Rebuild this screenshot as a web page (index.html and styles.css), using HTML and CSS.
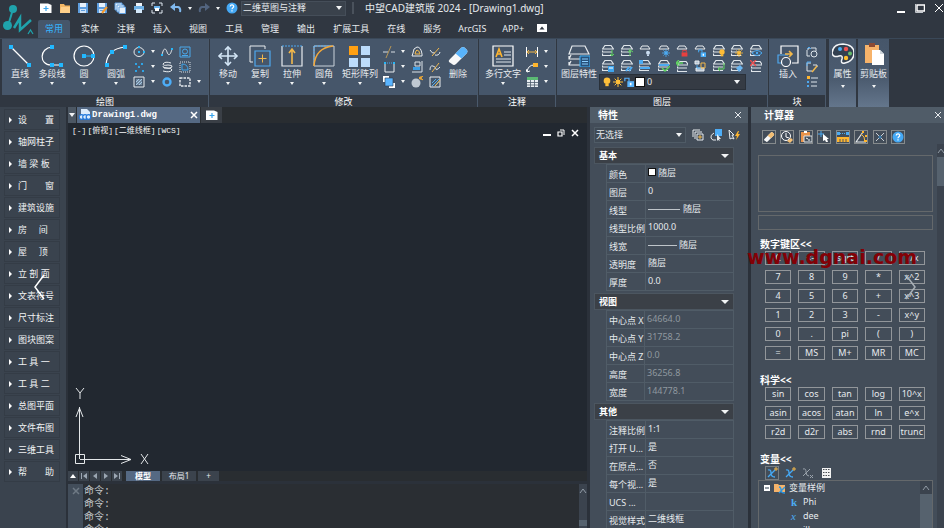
FILE: index.html
```html
<!DOCTYPE html>
<html lang="zh-CN">
<head>
<meta charset="utf-8">
<title>中望CAD建筑版 2024 - [Drawing1.dwg]</title>
<link rel="stylesheet" href="styles.css">
</head>
<body>
<svg class="defs" aria-hidden="true">
  <symbol id="layers" viewBox="0 0 12 12"><path d="M3 .500h6l2.500 3.500H.500zM.500 5.500V7H10M.500 8.500V10.500H10" fill="none" stroke="#dfe5ea" stroke-width="1.200"/></symbol>
  <symbol id="sun" viewBox="0 0 12 12"><circle cx="6" cy="6" r="2.600" fill="currentColor"/><path d="M6 0v12M0 6h12M2 2l8 8M10 2l-8 8" stroke="currentColor" stroke-width="1.200"/></symbol>
  <symbol id="bulb" viewBox="0 0 12 12"><circle cx="6" cy="4.500" r="4" fill="currentColor"/><path d="M4 8h4v3H4z" fill="currentColor"/></symbol>
  <symbol id="lock" viewBox="0 0 12 12"><path d="M1 5h10v7H1z" fill="currentColor"/><path d="M3 5V1.500h6V5" fill="none" stroke="currentColor" stroke-width="1.500"/></symbol>
  <symbol id="unlock" viewBox="0 0 12 12"><path d="M4 5h8v7H4z" fill="currentColor"/><path d="M1 5V1.500h5V5" fill="none" stroke="currentColor" stroke-width="1.400"/><path d="M7 7h2v3H7z" fill="#fff"/></symbol>
  <symbol id="floppy" viewBox="0 0 12 12"><path d="M1 1h10v10H1z" fill="#5f9fe0"/><path d="M3 1h6v4H3z" fill="#e7f1fb"/><path d="M3 7h6v4H3z" fill="#cfe3f7"/><path d="M4 8.500h4" stroke="#5f9fe0"/></symbol>
  <symbol id="help" viewBox="0 0 12 12"><circle cx="6" cy="6" r="5.500" fill="#45a9f5"/><path d="M4.300 4.500C4.300 2.300 7.800 2.500 7.700 4.600 7.600 5.800 6 5.800 6 7.200M6 8.200v1.300" fill="none" stroke="#fff" stroke-width="1.200"/></symbol>
  <symbol id="eraser" viewBox="0 0 22 22"><path d="M3 14L14 3q2-2 4 0l2 2q1 1 0 3L9 19q-2 2-4 0l-3-2q-1-1 1-3z" fill="#f7f8f9"/><path d="M8.500 8.500L14 3q2-2 4 0l2 2q1 1 0 3l-5.500 5.500z" fill="currentColor"/></symbol>
  <symbol id="newdoc" viewBox="0 0 12 12"><path d="M0 1.500h8l3.500 1.500V11H0z" fill="#fff"/><path d="M6 4v5M3.500 6.500h5" stroke="#3ba6ee" stroke-width="1.200"/></symbol>
</svg>

<header class="top">
  <svg class="logo" viewBox="0 0 36 38"><g stroke="#1fa3ac" stroke-width="2" fill="none"><path d="M13 9L8 26"/><path d="M14 28l6-10v12l11-10" stroke-width="2.500"/><path d="M28 34l2.500-4 2.500 4" stroke-width="1.200"/></g><circle cx="13" cy="9" r="4" fill="#1fa3ac"/><circle cx="7.500" cy="25.500" r="4.500" fill="#1fa3ac"/></svg>
  <div class="top-main">
    <div class="titlebar">
      <button class="qa" aria-label="新建"><svg><use href="#newdoc"/></svg></button>
      <button class="qa" aria-label="打开"><svg viewBox="0 0 12 12"><path d="M1 2h4l1 1.500h5V11H1z" fill="#f3b765"/><path d="M2 5h9v6H1z" fill="#ffd08a"/></svg></button>
      <button class="qa" aria-label="保存"><svg><use href="#floppy"/></svg></button>
      <button class="qa" aria-label="另存为"><svg viewBox="0 0 12 12"><use href="#floppy"/><path d="M6 11l5-6" stroke="#f59a2c" stroke-width="2"/></svg></button>
      <button class="qa" aria-label="全部保存"><svg viewBox="0 0 12 12"><path d="M1 1h7v7H1z" fill="#e7f1fb" stroke="#5f9fe0"/><path d="M3 3h7v7H3z" fill="#e7f1fb" stroke="#5f9fe0"/><path d="M5 5h6.500v6.500H5z" fill="#e7f1fb" stroke="#5f9fe0"/></svg></button>
      <button class="qa" aria-label="打印"><svg viewBox="0 0 12 12"><path d="M3 1h6v3H3z" fill="#eef3f8"/><path d="M1 4h10v4H1z" fill="#6fb1e6"/><path d="M3 7h6v4H3z" fill="#d4e8fa"/></svg></button>
      <button class="qa" aria-label="打印预览"><svg viewBox="0 0 12 12"><path d="M1 4V1h3M8 1h3v3M11 8v3H8M4 11H1V8" fill="none" stroke="#dfe8f1"/><path d="M3 4h6v3H3z" fill="#69b2ed"/><path d="M4 6h4v3H4z" fill="#fff"/></svg></button>
      <button class="qa" aria-label="撤销"><svg viewBox="0 0 12 12"><path d="M2 5h6q3 1 2 5" fill="none" stroke="#7fb8ee" stroke-width="2"/><path d="M0 5l5-4v8z" fill="#7fb8ee"/></svg></button>
      <i class="caret qa-caret"></i>
      <button class="qa" aria-label="重做"><svg viewBox="0 0 12 12"><path d="M10 5H4Q1 6 2 10" fill="none" stroke="#52647f" stroke-width="2"/><path d="M12 5L7 1v8z" fill="#52647f"/></svg></button>
      <i class="caret qa-caret"></i>
      <button class="qa" aria-label="帮助"><svg><use href="#help"/></svg></button>
      <label class="select workspace"><select aria-label="工作空间"><option>二维草图与注释</option></select></label>
      <h1>中望CAD建筑版 2024 - [Drawing1.dwg]</h1>
      <div class="win">
        <button aria-label="最小化"><svg viewBox="0 0 10 10"><path d="M1 9h8" stroke="#fff" stroke-width="2"/></svg></button>
        <button aria-label="还原"><svg viewBox="0 0 10 10"><path d="M2 2h7.500v6H2z" fill="none" stroke="#fff" stroke-width="1.500"/><path d="M.500 1v8.500H8" fill="none" stroke="#c3c8cd"/></svg></button>
        <button aria-label="关闭"><svg viewBox="0 0 10 10"><path d="M1 1l8 8M9 1L1 9" stroke="#fff"/></svg></button>
      </div>
    </div>
    <nav class="tabs">
      <button class="active">常用</button><button>实体</button><button>注释</button><button>插入</button><button>视图</button><button>工具</button><button>管理</button><button>输出</button><button>扩展工具</button><button>在线</button><button>服务</button><button class="latin">ArcGIS</button><button class="latin">APP+</button>
      <button class="fold" aria-label="折叠功能区"><svg viewBox="0 0 10 8"><path d="M0 0h10v8H0z" fill="#fff"/><path d="M2.500 5.500L5 2.500l2.500 3z" fill="#303741"/></svg></button>
    </nav>
  </div>
</header>

<section class="ribbon">
  <div class="panel">
    <div class="panel-body">
      <button class="big"><svg viewBox="0 0 22 22"><path d="M2 2l18 18" stroke="#fff" stroke-width="1.200"/><path d="M0 0h4v4H0zM18 18h4v4h-4z" fill="#22b8ff"/></svg><span>直线</span><i class="caret"></i></button>
      <button class="big"><svg viewBox="0 0 22 22"><path d="M11 2C-2 3-2 20 10 20h10" fill="none" stroke="#fff" stroke-width="1.200"/><path d="M9 0h4v4H9zM9 18h4v4H9zM18 18h4v4h-4z" fill="#22b8ff"/></svg><span>多段线</span><i class="caret"></i></button>
      <button class="big"><svg viewBox="0 0 22 22"><circle cx="11" cy="11" r="10" fill="none" stroke="#fff" stroke-width="1.200"/><path d="M11 11h9" stroke="#22b8ff"/><path d="M9 9h4v4H9zM18 9h4v4h-4z" fill="#22b8ff"/></svg><span>圆</span><i class="caret"></i></button>
      <button class="big"><svg viewBox="0 0 22 22"><path d="M1 20Q2 4 20 2" fill="none" stroke="#fff" stroke-width="1.200"/><path d="M0 18h4v4H0zM5 5h4v4H5zM18 0h4v4h-4z" fill="#22b8ff"/></svg><span>圆弧</span><i class="caret"></i></button>
      <div class="tools draw">
        <button class="tool" aria-label="椭圆"><svg viewBox="0 0 12 12"><ellipse cx="6" cy="6" rx="5" ry="4.500" fill="none" stroke="#e8ecef"/><path d="M5 5h2v2H5zM10 5h2v2h-2zM5 0h2v2H5z" fill="#29b6f6"/></svg><i class="caret"></i></button>
        <button class="tool" aria-label="样条曲线"><svg viewBox="0 0 12 12"><path d="M1 9C3 0 5 3 6 6s3 5 5-3" fill="none" stroke="#e8ecef"/><path d="M0 8h2v2H0zM10 2h2v2h-2z" fill="#29b6f6"/></svg></button>
        <button class="tool" aria-label="面域"><svg viewBox="0 0 12 12"><path d="M1 1h10v10H1z" fill="none" stroke="#4aa8ea"/><circle cx="6" cy="5.500" r="2.500" fill="none" stroke="#4aa8ea"/><path d="M3 9.500h6" stroke="#4aa8ea"/></svg></button>
        <button class="tool" aria-label="点"><svg viewBox="0 0 12 12"><path d="M2 2h2v2H2zM8 2h2v2H8zM5 5h2v2H5zM2 9h2v2H2zM9 9h2v2H9z" fill="#2fa3e4"/></svg><i class="caret"></i></button>
        <button class="tool" aria-label="螺旋"><svg viewBox="0 0 12 12"><path d="M10 2Q4 0 2 3q0 2 5 1 5 0 4 2-2 2-8 1M2 10q7 2 9-1 0-2-5-2-5 0-4-2" fill="none" stroke="#e8ecef"/></svg></button>
        <button class="tool" aria-label="边界"><svg viewBox="0 0 12 12"><path d="M1 1h10v10H1z" fill="none" stroke="#d5dde4" stroke-dasharray="1 1"/><path d="M3 9V3q6 0 6 6z" fill="none" stroke="#3fa5ea"/></svg></button>
        <button class="tool" aria-label="填充"><svg viewBox="0 0 12 12"><path d="M1 1h10v10H1z" fill="none" stroke="#e8ecef"/><path d="M3 3h6v6H3z" fill="#71879d"/><path d="M3 6l3-3M3 9l6-6M6 9l3-3" stroke="#a5c8e5"/></svg><i class="caret"></i></button>
        <button class="tool" aria-label="圆环"><svg viewBox="0 0 12 12"><circle cx="6" cy="6" r="3.500" fill="none" stroke="#4dadf7" stroke-width="2.400"/></svg></button>
        <button class="tool" aria-label="修订云线"><svg viewBox="0 0 12 12"><path d="M1 2h10v8H1z" fill="none" stroke="#e8ecef" stroke-width="1.400" stroke-dasharray="2.500 1"/></svg><i class="caret"></i></button>
      </div>
    </div>
    <h2>绘图</h2>
  </div>

  <div class="panel">
    <div class="panel-body">
      <button class="big"><svg viewBox="0 0 22 22"><path d="M11 2v18M2 11h18" stroke="#d5e7f7" stroke-width="1.600"/><path d="M8 5l3-3 3 3M8 17l3 3 3-3M5 8l-3 3 3 3M17 8l3 3-3 3" fill="none" stroke="#d5e7f7" stroke-width="1.600"/></svg><span>移动</span><i class="caret"></i></button>
      <button class="big"><svg viewBox="0 0 22 22"><path d="M4 17H1V1h15v3" fill="none" stroke="#e8ecef"/><path d="M6 6h15v15H6z" fill="none" stroke="#4ea8ef" stroke-width="1.200"/><path d="M13.500 9.500v8M9.500 13.500h8" stroke="#f2b84b"/></svg><span>复制</span><i class="caret"></i></button>
      <button class="big"><svg viewBox="0 0 22 22"><path d="M1 1v20h20V1" fill="none" stroke="#e8ecef" stroke-width="1.200"/><path d="M1 1h20" stroke="#4ea8ef" stroke-dasharray="2 1"/><path d="M11 5v14M8 8l3-4 3 4" fill="none" stroke="#f2b84b" stroke-width="1.600"/></svg><span>拉伸</span><i class="caret"></i></button>
      <button class="big"><svg viewBox="0 0 22 22"><path d="M1 1h20v20H1z" fill="none" stroke="#c9d2da"/><path d="M1 18V1h17" fill="none" stroke="#4ea8ef" stroke-dasharray="2 1"/><path d="M1 21Q2 3 20 1" fill="none" stroke="#f2a83b" stroke-width="1.500"/></svg><span>圆角</span><i class="caret"></i></button>
      <button class="big wide"><svg viewBox="0 0 22 22"><path d="M0 1h9v9H0z" fill="#ffa012"/><path d="M12 1h9v9h-9zM0 13h9v9H0zM12 13h9v9h-9z" fill="#bcdcfb"/></svg><span>矩形阵列</span><i class="caret"></i></button>
      <div class="tools offset">
        <button class="tool" aria-label="修剪"><svg viewBox="0 0 12 12"><path d="M0 6h5M8 6h4" stroke="#d6dce2"/><path d="M8 0L3 12" stroke="#b99755"/></svg><i class="caret"></i></button>
        <button class="tool" aria-label="偏移"><svg viewBox="0 0 12 12"><path d="M1 10h10V8Q10 1 6 1 2 2 2 7z" fill="none" stroke="#e8ecef"/><path d="M4 8h5Q8 4 6 4 5 4 4 8z" fill="none" stroke="#f2b84b"/></svg></button>
        <button class="tool" aria-label="打断"><svg viewBox="0 0 12 12"><path d="M1 4q2 4 5 3M6 9q4 1 5-3" fill="none" stroke="#e8ecef"/><path d="M10 2L3 10" stroke="#f2b84b"/></svg></button>
        <button class="tool" aria-label="拉长"><svg viewBox="0 0 12 12"><path d="M2 2v9h9V2" fill="none" stroke="#e8ecef"/><path d="M4 2h5" stroke="#4aa8ea" stroke-dasharray="1 1"/><path d="M1 1h2v2H1zM10 1h2v2h-2z" fill="#29b6f6"/></svg><i class="caret"></i></button>
        <button class="tool" aria-label="对齐"><svg viewBox="0 0 12 12"><path d="M4 1h5v4H4zM11 0v11H1" fill="none" stroke="#dce3e9"/><path d="M2 6h7v3H2z" fill="#3c9de5"/></svg></button>
        <button class="tool" aria-label="合并"><svg viewBox="0 0 12 12"><path d="M1 9q0-5 3-4t3 3 4-2" fill="none" stroke="#dce3e9"/><path d="M10 2L3 11" stroke="#f2b84b"/></svg></button>
        <button class="tool" aria-label="绘图次序"><svg viewBox="0 0 12 12"><path d="M0 0h6v6H0z" fill="#fff"/><path d="M6 7h6v5H6z" fill="#fff"/><path d="M2 2h8v8H2z" fill="#5ab4ff" stroke="#2c3b4c" stroke-width=".600"/></svg><i class="caret"></i></button>
        <button class="tool" aria-label="分解"><svg viewBox="0 0 12 12"><circle cx="5" cy="7" r="4.500" fill="#bfc8d2"/><path d="M8 3l4-3M8 1l4 3M10 0v4" stroke="#ffb02e"/></svg></button>
        <button class="tool" aria-label="编辑填充"><svg viewBox="0 0 12 12"><path d="M1 1h10v10H1z" fill="none" stroke="#e8ecef"/><path d="M3 7l4-4M3 10l7-7M6 10l4-4" stroke="#59aeea"/><path d="M11 4l-5 6" stroke="#f2b84b"/></svg></button>
      </div>
      <button class="big mid"><svg class="blue"><use href="#eraser"/></svg><span>删除</span></button>
    </div>
    <h2>修改</h2>
  </div>

  <div class="panel">
    <div class="panel-body">
      <button class="big xwide"><svg viewBox="0 0 22 22"><path d="M1 1h20v20H1z" fill="none" stroke="#fff" stroke-width="1.200"/><path d="M4 12L7 4l3 8M5 9h4" fill="none" stroke="#ffb52e" stroke-width="1.600"/><path d="M12 7h7M12 10h7M4 14h15M4 17h15" stroke="#dfe6ec"/></svg><span>多行文字</span><i class="caret"></i></button>
      <div class="tools one">
        <button class="tool" aria-label="标注"><svg viewBox="0 0 12 12"><path d="M.500 1v10M11.500 1v10" stroke="#fff"/><path d="M1 6h10M3 4L1 6l2 2M9 4l2 2-2 2" fill="none" stroke="#f2b84b"/></svg><i class="caret"></i></button>
        <button class="tool" aria-label="引线"><svg viewBox="0 0 12 12"><path d="M1 11Q2 4 8 4M0 8l1 3 3-1" fill="none" stroke="#fff"/><path d="M7 2h5v4H7z" fill="#ffb52e"/></svg><i class="caret"></i></button>
        <button class="tool" aria-label="表格"><svg viewBox="0 0 12 12"><path d="M1 2h11v9H1z" fill="#e9eef2"/><path d="M1 1h11v3H1z" fill="#5bb974"/><path d="M1 6.500h11M1 9h11M4.500 4v7M8.500 4v7" stroke="#4b5a6b" stroke-width=".800"/></svg><i class="caret"></i></button>
      </div>
    </div>
    <h2>注释</h2>
  </div>

  <div class="panel">
    <div class="panel-body">
      <button class="big wide"><svg viewBox="0 0 22 22"><path d="M4 1h13l4 8H1zM1 11v3h12M1 17v3h12M3 10l-2 4M3 16l-2 4" fill="none" stroke="#e8ecef" stroke-width="1.200"/><path d="M12 11h10v11H12z" fill="#28517a" stroke="#3fb0f5"/><path d="M14 14h6M14 16.500h6M14 19h6" stroke="#8bd0ff"/></svg><span>图层特性</span></button>
      <div class="layer-box">
        <div class="layer-grid">
          <button aria-label="置为当前"><svg viewBox="0 0 12 12"><use href="#layers"/><path d="M10 5v6M8 9l2 2 2-2" fill="none" stroke="#5ed35f"/></svg></button>
          <button aria-label="匹配"><svg viewBox="0 0 12 12"><use href="#layers"/><path d="M9 4v7M7 7l2-2 3 2" fill="none" stroke="#5ed35f"/></svg></button>
          <button aria-label="关闭图层"><svg viewBox="0 0 12 12"><path d="M3 1h6l2 3H1z" fill="none" stroke="#e8ecef"/><use href="#bulb" x="6" y="5" width="6" height="7" color="#c9dcf0"/></svg></button>
          <button aria-label="冻结"><svg viewBox="0 0 12 12"><path d="M3 1h6l2 3H1z" fill="none" stroke="#e8ecef"/><use href="#sun" x="4" y="4" width="8" height="8" color="#4cabf2"/></svg></button>
          <button aria-label="锁定"><svg viewBox="0 0 12 12"><path d="M3 1h6l2 3H1z" fill="none" stroke="#e8ecef"/><use href="#lock" x="5" y="4" width="7" height="8" color="#e8403f"/></svg></button>
          <button aria-label="解锁"><svg viewBox="0 0 12 12"><path d="M3 1h6l2 3H1z" fill="none" stroke="#e8ecef"/><use href="#unlock" x="4" y="4" width="8" height="8" color="#49aef8"/></svg></button>
          <button aria-label="打开所有图层"><svg viewBox="0 0 12 12"><use href="#layers"/><use href="#bulb" x="5" y="4" width="8" height="8" color="#ffbd36"/></svg></button>
          <button aria-label="解冻"><svg viewBox="0 0 12 12"><use href="#layers"/><use href="#sun" x="4" y="4" width="8" height="8" color="#ffbd36"/></svg></button>
          <button aria-label="浏览"><svg viewBox="0 0 12 12"><use href="#layers"/><path d="M2 8q5-5 10 0-5 5-10 0z" fill="#3d536b" stroke="#4cabf2"/><circle cx="7" cy="8" r="1.200" fill="#4cabf2"/></svg></button>
          <button aria-label="图层状态"><svg viewBox="0 0 12 12"><use href="#layers"/><path d="M6 6h6v6H6z" fill="#3ea5ee"/><path d="M7 8h4" stroke="#fff"/></svg></button>
          <button aria-label="隔离"><svg viewBox="0 0 12 12"><use href="#layers"/><path d="M5 11l3-4M8 11l3-4" stroke="#4cabf2" stroke-width="2"/></svg></button>
          <button aria-label="取消隔离"><svg viewBox="0 0 12 12"><use href="#layers"/><path d="M0 0h4v4H0z" fill="#4cabf2"/><path d="M1 7h10v2H1z" fill="#4cabf2"/></svg></button>
          <button aria-label="设为当前图层"><svg viewBox="0 0 12 12"><use href="#layers"/><path d="M1 5h10" stroke="#4cabf2" stroke-width="2"/><path d="M4 8l3 3 5-5" fill="none" stroke="#5ed35f" stroke-width="1.500"/></svg></button>
          <button aria-label="上一个图层"><svg viewBox="0 0 12 12"><use href="#layers" x="1" y="1"/><path d="M0 3h7M3 0L0 3l3 3" fill="none" stroke="#5ed35f" stroke-width="1.300"/></svg></button>
          <button aria-label="合并图层"><svg viewBox="0 0 12 12"><path d="M1 1h4v3H1zM2 8h8v3H2z" fill="#b5c5d5" stroke="#e8ecef"/><path d="M7 3h4v5H7z" fill="none" stroke="#f2b84b"/><path d="M3 5v3h4" fill="none" stroke="#4cabf2"/></svg></button>
          <button aria-label="更改图层"><svg viewBox="0 0 12 12"><use href="#layers"/><path d="M5 9h6V3M7 7L5 9l2 2" fill="none" stroke="#5ed35f"/></svg></button>
          <button aria-label="图层转换"><svg viewBox="0 0 12 12"><use href="#layers"/><path d="M5 8l4-3 3 3-4 4z" fill="#69b6f2"/></svg></button>
          <button aria-label="删除图层"><svg viewBox="0 0 12 12"><use href="#layers" x="1" y="1"/><path d="M0 0l6 6M6 0L0 6" stroke="#f04c4c" stroke-width="1.300"/></svg></button>
        </div>
        <div class="layer-combo">
          <svg class="yellow"><use href="#bulb"/></svg><svg class="yellow"><use href="#sun"/></svg><svg class="blue"><use href="#unlock"/></svg><b class="swatch"></b>
          <label class="select"><select aria-label="当前图层"><option>0</option></select></label>
        </div>
      </div>
    </div>
    <h2>图层</h2>
  </div>

  <div class="panel">
    <div class="panel-body">
      <button class="big mid"><svg viewBox="0 0 22 22"><path d="M4 9V1h17v17h-6" fill="none" stroke="#fff" stroke-width="1.200"/><path d="M5 18H1v-8h10" fill="none" stroke="#4ea8ef" stroke-width="1.200"/><circle cx="9" cy="17" r="4.500" fill="#46566a" stroke="#fff" stroke-width="1.200"/><path d="M8 9h7M12 6l3 3-3 3" fill="none" stroke="#f2b84b" stroke-width="1.600"/></svg><span>插入</span></button>
      <div class="tools single">
        <button class="tool" aria-label="创建块"><svg viewBox="0 0 12 12"><path d="M1 4v6h3M5 2h5v3M1 3h2V1" fill="none" stroke="#dde4ea"/><path d="M1 3l2-2 2 2" stroke="#4ea8ef" fill="none"/><circle cx="8" cy="8" r="3" fill="none" stroke="#dde4ea"/></svg></button>
        <button class="tool" aria-label="编辑块"><svg viewBox="0 0 12 12"><path d="M1 10V2h4M7 4h4v2M1 10h5" fill="none" stroke="#dde4ea"/><path d="M1 5V1h4" fill="none" stroke="#4ea8ef"/><path d="M11 5l-5 6" stroke="#f2b84b" stroke-width="1.500"/></svg></button>
        <button class="tool" aria-label="定义属性"><svg viewBox="0 0 12 12"><path d="M1 0h3v3H1z" fill="#ffb52e"/><path d="M1 5h2v2H1zM1 9h2v2H1z" fill="#4ea8ef"/><path d="M5 2h7M5 6h6M5 10h6" stroke="#dde4ea"/></svg></button>
      </div>
    </div>
    <h2>块</h2>
  </div>

  <button class="big tall"><svg viewBox="0 0 22 22"><path d="M0 10Q1 1 11 1q11 1 11 9t-9 10q-5 1-3-4 1-4-3-3-6 2-7-3z" fill="#334050" stroke="#f3f5f7" stroke-width="1.500"/><circle cx="8" cy="6" r="2" fill="#4cabf2"/><circle cx="14" cy="6" r="2.200" fill="#ef5350"/><circle cx="18" cy="10.500" r="2" fill="#66bb6a"/><circle cx="14" cy="15" r="2.200" fill="#ffc02e"/></svg><span>属性</span><i class="caret"></i></button>
  <button class="big tall clip"><svg viewBox="0 0 22 22"><path d="M2 2h14v18H2z" fill="#f7b36a"/><path d="M6 0h6v4H6z" fill="#8c4a33"/><path d="M9 7h8l4 4v11H9z" fill="#fff"/><path d="M17 7v4h4" fill="#cfd6dc"/></svg><span>剪贴板</span><i class="caret"></i></button>
</section>

<main class="work">
  <nav class="side">
    <button>设　　置</button><button>轴网柱子</button><button>墙 梁 板</button><button>门　　窗</button><button>建筑设施</button><button>房     间</button><button>屋     顶</button><button>立 剖 面</button><button>文表符号</button><button>尺寸标注</button><button>图块图案</button><button>工 具 一</button><button>工 具 二</button><button>总图平面</button><button>文件布图</button><button>三维工具</button><button>帮　　助</button>
  </nav>

  <section class="doc">
    <div class="doc-tabs">
      <button class="drop" aria-label="文档列表"><i class="caret"></i></button>
      <div class="doc-tab"><svg viewBox="0 0 12 12"><path d="M2 0h6l3 3v6H2z" fill="#dcebfb"/><circle cx="2.500" cy="8" r="2.300" fill="#dcebfb" stroke="#2178dd" stroke-width="1.200"/><circle cx="6" cy="8" r="2.300" fill="#dcebfb" stroke="#2178dd" stroke-width="1.200"/><circle cx="9.500" cy="8" r="2.300" fill="#dcebfb" stroke="#2178dd" stroke-width="1.200"/></svg><span>Drawing1.dwg</span><button aria-label="关闭文档"><svg viewBox="0 0 8 8"><path d="M1 1l6 6M7 1L1 7" stroke="#fff" stroke-width="1.500"/></svg></button></div>
      <button class="new" aria-label="新建文档"><svg><use href="#newdoc"/></svg></button>
    </div>
    <div class="canvas">
      <div class="canvas-head">
        <div class="view-label"><span>[-]</span><span>[俯视]</span><span>[二维线框]</span><span>[WCS]</span></div>
        <div class="doc-win">
          <button aria-label="最小化视图"><svg viewBox="0 0 8 8"><path d="M0 6h8" stroke="#fff" stroke-width="2"/></svg></button>
          <button aria-label="还原视图"><svg viewBox="0 0 8 8"><path d="M1 3h4v4H1z" fill="none" stroke="#fff" stroke-width="1.200"/><path d="M3 1h4v5" fill="none" stroke="#fff"/></svg></button>
          <button aria-label="关闭视图"><svg viewBox="0 0 8 8"><path d="M1 1l6 6M7 1L1 7" stroke="#fff" stroke-width="1.500"/></svg></button>
        </div>
      </div>
      <svg class="ucs" viewBox="0 0 78 78"><g fill="none" stroke="#e4e7e9"><path d="M.500 67.500h9v9h-9zM4.500 72V20M5 72.500h51"/><path d="M1 30l3.500-9L8 30M46 68.500l10 4-10 4"/><path d="M1 1l4 5 4-5M5 6v6M66 67l7 10M73 67l-7 10"/></g></svg>
    </div>
    <div class="layouts">
      <button aria-label="展开"><svg viewBox="0 0 8 8"><path d="M1 6l3-4 3 4z" fill="#fff"/></svg></button>
      <button aria-label="首个"><svg viewBox="0 0 8 8"><path d="M1 1h1v6H1zM7 1v6L3 4z" fill="#9ba6b2"/></svg></button>
      <button aria-label="上一个"><svg viewBox="0 0 8 8"><path d="M6 1v6L2 4z" fill="#9ba6b2"/></svg></button>
      <button aria-label="下一个"><svg viewBox="0 0 8 8"><path d="M2 1v6l4-3z" fill="#9ba6b2"/></svg></button>
      <button aria-label="最后"><svg viewBox="0 0 8 8"><path d="M6 1h1v6H6zM1 1v6l4-3z" fill="#9ba6b2"/></svg></button>
      <button class="name active">模型</button><button class="name">布局1</button><button class="name plus">+</button>
    </div>
    <div class="cmd">
      <button class="cmd-close" aria-label="关闭命令行"><svg viewBox="0 0 8 8"><path d="M1 1l6 6M7 1L1 7" stroke="#6f7a85" stroke-width="1.500"/></svg></button>
      <div class="cmd-log"><p>命令:</p><p>命令:</p><p>命令:</p><p>命令:</p></div>
      <div class="scroll"><svg viewBox="0 0 8 8"><path d="M1 6l3-4 3 4" fill="none" stroke="#929ca6"/></svg><i class="thumb low"></i></div>
    </div>
  </section>

  <aside class="props">
    <div class="dock-title"><h3>特性</h3><button aria-label="关闭特性"><svg viewBox="0 0 8 8"><path d="M1 1l6 6M7 1L1 7" stroke="#e8ebee"/></svg></button></div>
    <div class="pick">
      <label class="select"><select aria-label="选择对象"><option>无选择</option></select></label>
      <button aria-label="切换选择"><svg viewBox="0 0 12 12"><path d="M1 8V1h7M3 10V3h7" fill="none" stroke="#e8ecef"/><path d="M5 5h6v6H5z" fill="none" stroke="#e8ecef"/><path d="M8 6v4M6 8h4" stroke="#f2b84b"/></svg></button>
      <button aria-label="选择对象"><svg viewBox="0 0 12 12"><path d="M5 0h7v7H5z" fill="#4dadf7"/><path d="M4 4Q0 6 1 9t5 2" fill="none" stroke="#e8ecef"/><path d="M7 5l4 5H9l1 2-2-1-1 1z" fill="#e8ecef"/></svg></button>
      <button aria-label="快速选择"><svg viewBox="0 0 12 12"><path d="M1 1l5 5H4l2 4-2-1-2 1z" fill="none" stroke="#e8ecef"/><path d="M10 2L7 7h2l-1 4 4-6h-2l1-3z" fill="#ffb52e"/></svg></button>
    </div>
    <h4>基本<i class="caret"></i></h4>
    <table>
      <tr><th scope="row">颜色</th><td><b class="swatch small"></b>随层</td></tr>
      <tr><th scope="row">图层</th><td>0</td></tr>
      <tr><th scope="row">线型</th><td><i class="line long"></i>随层</td></tr>
      <tr><th scope="row">线型比例</th><td>1000.0</td></tr>
      <tr><th scope="row">线宽</th><td><i class="line"></i>随层</td></tr>
      <tr><th scope="row">透明度</th><td>随层</td></tr>
      <tr><th scope="row">厚度</th><td>0.0</td></tr>
    </table>
    <h4>视图<i class="caret"></i></h4>
    <table class="readonly">
      <tr><th scope="row">中心点 X</th><td>64664.0</td></tr>
      <tr><th scope="row">中心点 Y</th><td>31758.2</td></tr>
      <tr><th scope="row">中心点 Z</th><td>0.0</td></tr>
      <tr><th scope="row">高度</th><td>36256.8</td></tr>
      <tr><th scope="row">宽度</th><td>144778.1</td></tr>
    </table>
    <h4>其他<i class="caret"></i></h4>
    <table>
      <tr><th scope="row">注释比例</th><td>1:1</td></tr>
      <tr><th scope="row">打开 U...</th><td>是</td></tr>
      <tr><th scope="row">在原点...</th><td>否</td></tr>
      <tr><th scope="row">每个视...</th><td>是</td></tr>
      <tr><th scope="row">UCS ...</th><td></td></tr>
      <tr><th scope="row">视觉样式</th><td>二维线框</td></tr>
    </table>
  </aside>

  <aside class="calc">
    <div class="dock-title"><h3>计算器</h3><button aria-label="关闭计算器"><svg viewBox="0 0 8 8"><path d="M1 1l6 6M7 1L1 7" stroke="#e8ebee"/></svg></button></div>
    <div class="calc-body">
      <div class="calc-main">
        <div class="calc-tools">
          <button aria-label="清除"><svg class="sand"><use href="#eraser"/></svg></button>
          <button aria-label="清除历史"><svg viewBox="0 0 12 12"><circle cx="5" cy="5" r="4.500" fill="none" stroke="#fff"/><path d="M5 2v4l3 1" fill="none" stroke="#fff"/><path d="M6 10l4-3 2 2-3 3z" fill="#f5c074"/></svg></button>
          <button aria-label="粘贴"><svg viewBox="0 0 12 12"><path d="M1 1h9v10H1z" fill="#e9934a"/><path d="M4 0h3v2H4z" fill="#fff"/><path d="M4 5h8v6H4z" fill="#46515d" stroke="#dfe4e8"/><path d="M6 7l2 1M8 9h2" stroke="#fff"/></svg></button>
          <button aria-label="取坐标"><svg viewBox="0 0 12 12"><path d="M3 0v6M0 3h6" stroke="#4cabf2"/><path d="M5 3l6 5H9l1 3H8L7 9l-2 1z" fill="#fff"/></svg></button>
          <button aria-label="距离"><svg viewBox="0 0 12 12"><path d="M0 1h3v3H0zM9 1h3v3H9z" fill="#4cabf2"/><path d="M3 2.500h6" stroke="#4cabf2" stroke-dasharray="1 1"/><path d="M0 6h12v5H0z" fill="#ffb52e"/><path d="M3 8v3M6 8v3M9 8v3" stroke="#4b5560"/></svg></button>
          <button aria-label="角度"><svg viewBox="0 0 12 12"><path d="M8 1L1 11h10" fill="none" stroke="#e8ecef" stroke-width="1.200"/><path d="M6 3q4 2 4 8" fill="none" stroke="#f2b84b"/><path d="M7 0h2v2H7zM10 4h2v2h-2zM9 9h3v2H9z" fill="#ffb52e"/></svg></button>
          <button aria-label="交点"><svg viewBox="0 0 12 12"><path d="M2 2l8 8M10 2l-8 8" stroke="#c9d0d6"/><circle cx="6" cy="6" r="1.500" fill="#3e83b5"/></svg></button>
          <button aria-label="计算器帮助"><svg><use href="#help"/></svg></button>
        </div>
        <textarea class="history" aria-label="历史记录" readonly></textarea>
        <input class="entry" aria-label="表达式">
        <h4>数字键区&lt;&lt;</h4>
        <div class="keys">
          <button>C</button><button>&lt;--</button><button>sqrt</button><button>/</button><button>1/x</button>
          <button>7</button><button>8</button><button>9</button><button>*</button><button>x^2</button>
          <button>4</button><button>5</button><button>6</button><button>+</button><button>x^3</button>
          <button>1</button><button>2</button><button>3</button><button>-</button><button>x^y</button>
          <button>0</button><button>.</button><button>pi</button><button>(</button><button>)</button>
          <button>=</button><button>MS</button><button>M+</button><button>MR</button><button>MC</button>
        </div>
        <h4>科学&lt;&lt;</h4>
        <div class="keys">
          <button>sin</button><button>cos</button><button>tan</button><button>log</button><button>10^x</button>
          <button>asin</button><button>acos</button><button>atan</button><button>ln</button><button>e^x</button>
          <button>r2d</button><button>d2r</button><button>abs</button><button>rnd</button><button>trunc</button>
        </div>
        <h4>变量&lt;&lt;</h4>
        <div class="var-tools">
          <button class="active" aria-label="新建变量"><svg viewBox="0 0 12 12"><path d="M2 3q3-1 3 3t4 4M9 3L2 10" fill="none" stroke="#45a9f5" stroke-width="1.300"/><path d="M10 0v4M8 2h4" stroke="#f2b84b"/></svg></button>
          <button aria-label="编辑变量"><svg viewBox="0 0 12 12"><path d="M2 3q3-1 3 3t4 4M9 3L2 10" fill="none" stroke="#45a9f5" stroke-width="1.300"/><path d="M10 0v4M8 2h4" stroke="#f2b84b"/></svg></button>
          <button aria-label="删除变量"><svg viewBox="0 0 12 12"><path d="M1 2q3-1 3 3t3 4M8 2L1 9M8 8l3 3M11 8l-3 3" fill="none" stroke="#9aa3ac"/></svg></button>
          <button aria-label="返回变量"><svg viewBox="0 0 12 12"><path d="M2 1h9v10H2z" fill="#f2f2f2"/><path d="M3 2.500h7M3 5.500h7M3 8.500h7" stroke="#4a4f55" stroke-dasharray="1.500 1"/></svg></button>
        </div>
        <div class="tree">
          <ul>
            <li class="root"><svg viewBox="0 0 8 8"><path d="M1 1h6v6H1z" fill="#fff"/><path d="M2 4h4" stroke="#26384a"/></svg><svg viewBox="0 0 12 12"><path d="M0 2h4l1 1h6v7H0z" fill="#f4b36b"/><path d="M5 5q2 0 2 3t4 3M11 5l-6 6" fill="none" stroke="#2b96e3" stroke-width="1.300"/></svg>变量样例</li>
            <li><b>k</b>Phi</li>
            <li><b class="var">x</b>dee</li>
            <li><b class="var">x</b>ille</li>
          </ul>
          <div class="scroll"><svg viewBox="0 0 8 8"><path d="M1 6l3-4 3 4" fill="none" stroke="#929ca6"/></svg><i class="thumb"></i></div>
        </div>
      </div>
      <div class="scroll slim"><svg viewBox="0 0 8 8"><path d="M1 6l3-4 3 4" fill="none" stroke="#929ca6"/></svg><i class="thumb short"></i></div>
    </div>
  </aside>
</main>

<button class="slide prev" aria-label="上一张"><svg viewBox="0 0 12 26"><path d="M11 1L2 13l9 12" fill="none" stroke="#fff" stroke-width="1.500"/></svg></button>
<button class="slide next" aria-label="下一张"><svg viewBox="0 0 12 26"><path d="M1 1l9 12L1 25" fill="none" stroke="#a9b0b7" stroke-width="1.500"/></svg></button>
<div class="watermark">www.dgnai.com</div>
</body>
</html>
```
FILE: styles.css
```css
* { box-sizing: border-box; }

body {
  margin: 0;
  height: 100vh;
  display: flex;
  flex-direction: column;
  position: relative;
  overflow: hidden;
  background: #303741;
  color: #e6eaed;
  font: 9px/12px "Noto Sans", "Noto Sans CJK SC", sans-serif;
}

.defs { position: absolute; width: 0; height: 0; }

h1, h2, h3, h4, p, ul { margin: 0; padding: 0; font-size: inherit; font-weight: 400; list-style: none; }

button, select, input, textarea { font: inherit; color: inherit; margin: 0; }

button {
  padding: 0;
  border: 0;
  background: none;
  display: flex;
  align-items: center;
  justify-content: center;
}

svg { display: block; width: 12px; height: 12px; flex: none; }

.blue { color: #58b3fb; }
.yellow { color: #ffc03a; }
.sand { color: #f2bd72; }

.caret {
  display: block;
  width: 0;
  height: 0;
  flex: none;
  border: 2px solid transparent;
  border-top: 3px solid #f2f4f5;
  border-bottom: 0;
}

.select { position: relative; display: flex; min-width: 0; }
.select select { appearance: none; width: 100%; border: 0; padding: 0 1px; background: none; outline: 0; }
.select::after {
  content: "";
  position: absolute;
  right: 3px;
  top: calc(50% - 2px);
  border: 3px solid transparent;
  border-top: 4px solid #f2f4f5;
  border-bottom: 0;
}

/* Title bar and ribbon tabs */
.top { display: flex; flex: none; height: 38px; }
.logo { width: 36px; height: 38px; }
.top-main { flex: 1; min-width: 0; display: flex; flex-direction: column; justify-content: space-between; }
.titlebar { display: flex; align-items: center; height: 16px; padding-left: 1px; }
.qa { width: 18px; height: 16px; margin-right: 1px; }
.qa:nth-child(2n) { margin-right: 0; }
.qa-caret { margin: 0 3px; }
.workspace { width: 105px; height: 15px; background: #3a424c; border: 1px solid #454e59; }
.titlebar h1 { margin-left: 6px; padding-left: 11px; border-left: 2px solid #4a525c; font-size: 10px; line-height: 12px; white-space: nowrap; }
.win { margin-left: auto; display: flex; gap: 9px; }
.win svg { width: 10px; height: 10px; }
.tabs { display: flex; align-items: flex-end; }
.tabs button { height: 18px; margin: 0 2px; padding: 0 7px; white-space: nowrap; }
.tabs .active { background: #46566a; color: #35b4ff; border-radius: 2px 2px 0 0; }
.tabs .latin { padding: 0 6px; }
.tabs .fold { padding: 0 3px; }
.fold svg { width: 10px; height: 8px; margin-bottom: 2px; }

/* Ribbon */
.ribbon { display: flex; flex: none; gap: 2px; height: 69px; padding-left: 2px; border-top: 1px solid #3a4858; }
.panel { display: flex; flex-direction: column; background: #46566a; box-shadow: 1px 0 #4a596b; }
.panel-body { display: flex; flex: 1; padding: 0 2px; }
.panel h2 { height: 12px; background: #303741; text-align: center; line-height: 13px; color: #fff; }
.big { flex-direction: column; justify-content: flex-start; width: 32px; padding-top: 6px; gap: 1px; white-space: nowrap; }
.big svg { width: 22px; height: 22px; }
.big .caret { margin-top: 1px; }
.wide { width: 40px; }
.mid { width: 34px; }
.xwide { width: 44px; }
.tools { display: grid; grid-template-columns: 28px 18px auto; grid-auto-rows: 15px; padding-top: 5px; }
.tools.draw { grid-template-columns: 28px 18px 28px; }
.tools.offset { margin-left: 2px; }
.tools.one { grid-template-columns: 28px; }
.tools.single { grid-template-columns: 18px; }
.tool { justify-content: flex-start; padding-left: 1px; gap: 6px; }
.tall { width: 27px; padding-top: 4px; gap: 3px; margin-left: 2px; background: linear-gradient(#46566a, #4c5c70 60%, #64768c); }
.clip { width: 31px; margin-left: 0; }
.tall .caret { margin-top: 2px; }
.layer-box { width: 166px; padding-top: 4px; }
.layer-grid { display: grid; grid-template-columns: repeat(9, 1fr); grid-auto-rows: 15px; margin-bottom: 1px; }
.layer-combo { display: flex; align-items: center; gap: 1px; width: 147px; height: 16px; padding: 0 2px; background: #353b44; border: 1px solid #293039; }
.layer-combo svg { width: 10px; height: 10px; }
.layer-combo .select { flex: 1; }
.swatch { width: 10px; height: 10px; background: #fff; border: 1px solid #111; }
.swatch.small { display: inline-block; width: 8px; height: 8px; margin: 0 2px 0 0; }

/* Work area */
.work { flex: 1; min-height: 0; display: grid; grid-template-columns: 66px minmax(0, 1fr) 158px 193px; column-gap: 3px; background: #2b313a; }

.side { display: flex; flex-direction: column; padding: 2px 6px 0 4px; background: #3a434e; min-height: 0; overflow: hidden; }
.side button { height: 21px; margin-bottom: 1px; flex: none; justify-content: flex-start; white-space: pre; border: 1px solid #343c46; color: #f1f3f4; }
.side button::before { content: ""; margin: 0 6px 0 4px; border: 3px solid transparent; border-left: 3px solid #fff; border-right: 0; }

.doc { display: flex; flex-direction: column; min-width: 0; min-height: 0; margin-left: -1px; }
.doc-tabs { display: flex; gap: 1px; height: 16px; background: #292d31; flex: none; }
.drop { width: 8px; background: #4c5763; }
.drop .caret { border-width: 4px 3px 0; }
.doc-tab { display: flex; align-items: center; gap: 1px; width: 123px; padding: 0 2px; background: #556983; font: bold 9px/12px "Liberation Mono", monospace; color: #fff; }
.doc-tab button { margin-left: auto; }
.doc-tab button svg { width: 8px; height: 8px; }
.new { width: 21px; background: #3a3f46; }
.canvas { flex: 1; min-height: 0; display: flex; flex-direction: column; justify-content: space-between; background: #222830; }
.canvas-head { display: flex; justify-content: space-between; padding: 2px 8px 0 4px; }
.view-label { display: flex; gap: 1px; font: 8px/12px "Liberation Mono", "Noto Sans CJK SC", monospace; color: #f4f5f6; }
.doc-win { display: flex; gap: 6px; align-items: flex-end; }
.doc-win svg { width: 8px; height: 8px; }
.ucs { width: 78px; height: 78px; margin: 0 0 6px 7px; }
.layouts { display: flex; gap: 1px; height: 10px; flex: none; background: #292d31; }
.layouts button { width: 10px; background: #3b434d; }
.layouts svg { width: 8px; height: 8px; }
.layouts .name { width: 34px; margin-left: 1px; font-size: 8px; line-height: 10px; }
.layouts .name:nth-child(6) { margin-left: 3px; }
.layouts .active { background: #556983; color: #fff; font-weight: 700; }
.layouts .plus { width: 21px; }
.cmd { display: flex; height: 44px; margin-top: 3px; flex: none; overflow: hidden; background: #2a2e33; }
.cmd-close { width: 15px; background: #424d5a; align-items: flex-start; padding-top: 3px; }
.cmd-close svg { width: 8px; height: 8px; }
.cmd-log { flex: 1; padding: 1px 0 0 1px; font: 10px/13px "Liberation Mono", "Noto Sans CJK SC", monospace; color: #c3c8cc; }

.scroll { display: flex; flex-direction: column; align-items: center; width: 8px; flex: none; background: #3b434e; padding-top: 3px; }
.scroll svg { width: 8px; height: 8px; }
.thumb { width: 100%; flex: 1; margin-top: 2px; background: #56626e; }
.thumb.low { flex: none; height: 6px; margin-top: auto; margin-bottom: 2px; }
.thumb.short { flex: none; height: 29px; }

/* Docked panels */
.props, .calc { display: flex; flex-direction: column; min-width: 0; min-height: 0; overflow: hidden; background: #434d59; }
.dock-title { display: flex; align-items: center; justify-content: space-between; height: 16px; flex: none; padding: 0 6px 0 8px; background: #505c68; }
.dock-title h3 { font-size: 10px; font-weight: 700; color: #fff; }
.dock-title svg { width: 8px; height: 8px; }
.calc .dock-title { padding: 0 2px 0 13px; }

.pick { display: flex; align-items: center; gap: 6px; padding: 4px 8px 0 4px; }
.pick .select { flex: 1; height: 16px; border: 1px solid #4f5b66; background: #3f4954; }
.props h4 { display: flex; flex: none; align-items: center; justify-content: space-between; height: 17px; margin: 2px 14px 0 4px; padding: 0 4px; background: #3b4047; border: 1px solid #4c5660; font-weight: 700; color: #fff; }
.pick + h4 { margin-top: 4px; }
.props h4 .caret { border-width: 4px 4px 0; }
.props table { margin: 0 14px 0 16px; border-collapse: collapse; table-layout: fixed; flex: none; display: table; }
.props tr { height: 18px; }
.props th, .props td { border: 1px solid #505c67; padding: 0 0 0 2px; font-weight: 400; text-align: left; line-height: 12px; white-space: nowrap; overflow: hidden; }
.props th { width: 38px; padding-top: 3px; }
.props td { padding-bottom: 2px; }
.readonly td { color: #8f989f; }
.line { display: inline-block; width: 29px; height: 1px; margin-right: 2px; vertical-align: middle; background: #bfc5ca; }
.line.long { width: 32px; margin-right: 3px; }

.calc-body { display: flex; flex: 1; min-height: 0; }
.calc-main { flex: 1; min-width: 0; display: flex; flex-direction: column; padding: 7px 4px 0 7px; }
.slim { width: 7px; margin-top: 21px; }
.calc-tools { display: flex; justify-content: space-between; padding: 0 28px 0 4px; margin-bottom: 11px; }
.calc-tools button { width: 14px; height: 14px; border: 1px solid #858a8c; }
.history, .entry { display: block; width: 100%; flex: none; padding: 0; border: 1px solid #64686b; background: none; resize: none; border-radius: 0; }
.history { height: 57px; }
.entry { height: 15px; margin-top: 3px; }
.calc h4 { height: 14px; flex: none; margin: 7px 0 0 2px; font-size: 10px; line-height: 14px; font-weight: 700; color: #fff; }
.keys { display: grid; grid-template-columns: repeat(5, 1fr); grid-auto-rows: 14px; gap: 5px 7px; padding: 0 8px 0 7px; }
.keys + h4 { margin-top: 13px; }
.keys button { border: 1px solid #92969a; line-height: 12px; min-width: 0; }
.var-tools { display: flex; gap: 4px; padding-left: 7px; flex: none; }
.var-tools button { width: 14px; height: 14px; }
.var-tools .active { border: 1px solid #777d82; }
.tree { display: flex; flex: 1; min-height: 0; overflow: hidden; border: 1px solid #64686b; border-bottom: 0; }
.tree ul { flex: 1; padding-left: 4px; }
.tree li { display: flex; align-items: center; height: 14px; gap: 4px; padding-left: 28px; }
.tree .root { padding-left: 0; gap: 3px; }
.root svg:first-child { width: 8px; height: 8px; }
.tree b { width: 8px; color: #4cabf2; font-family: "Liberation Serif", serif; font-size: 11px; }
.tree .var { font-style: italic; font-weight: 400; }
.tree .scroll { width: 12px; }

/* Overlays */
.slide { position: absolute; top: 274px; }
.slide svg { width: 12px; height: 26px; }
.prev { left: 33px; }
.next { right: 27px; }
.watermark { position: absolute; top: 245px; right: 27px; color: #830006; font: bold 19px/24px "DejaVu Sans", sans-serif; }
```
